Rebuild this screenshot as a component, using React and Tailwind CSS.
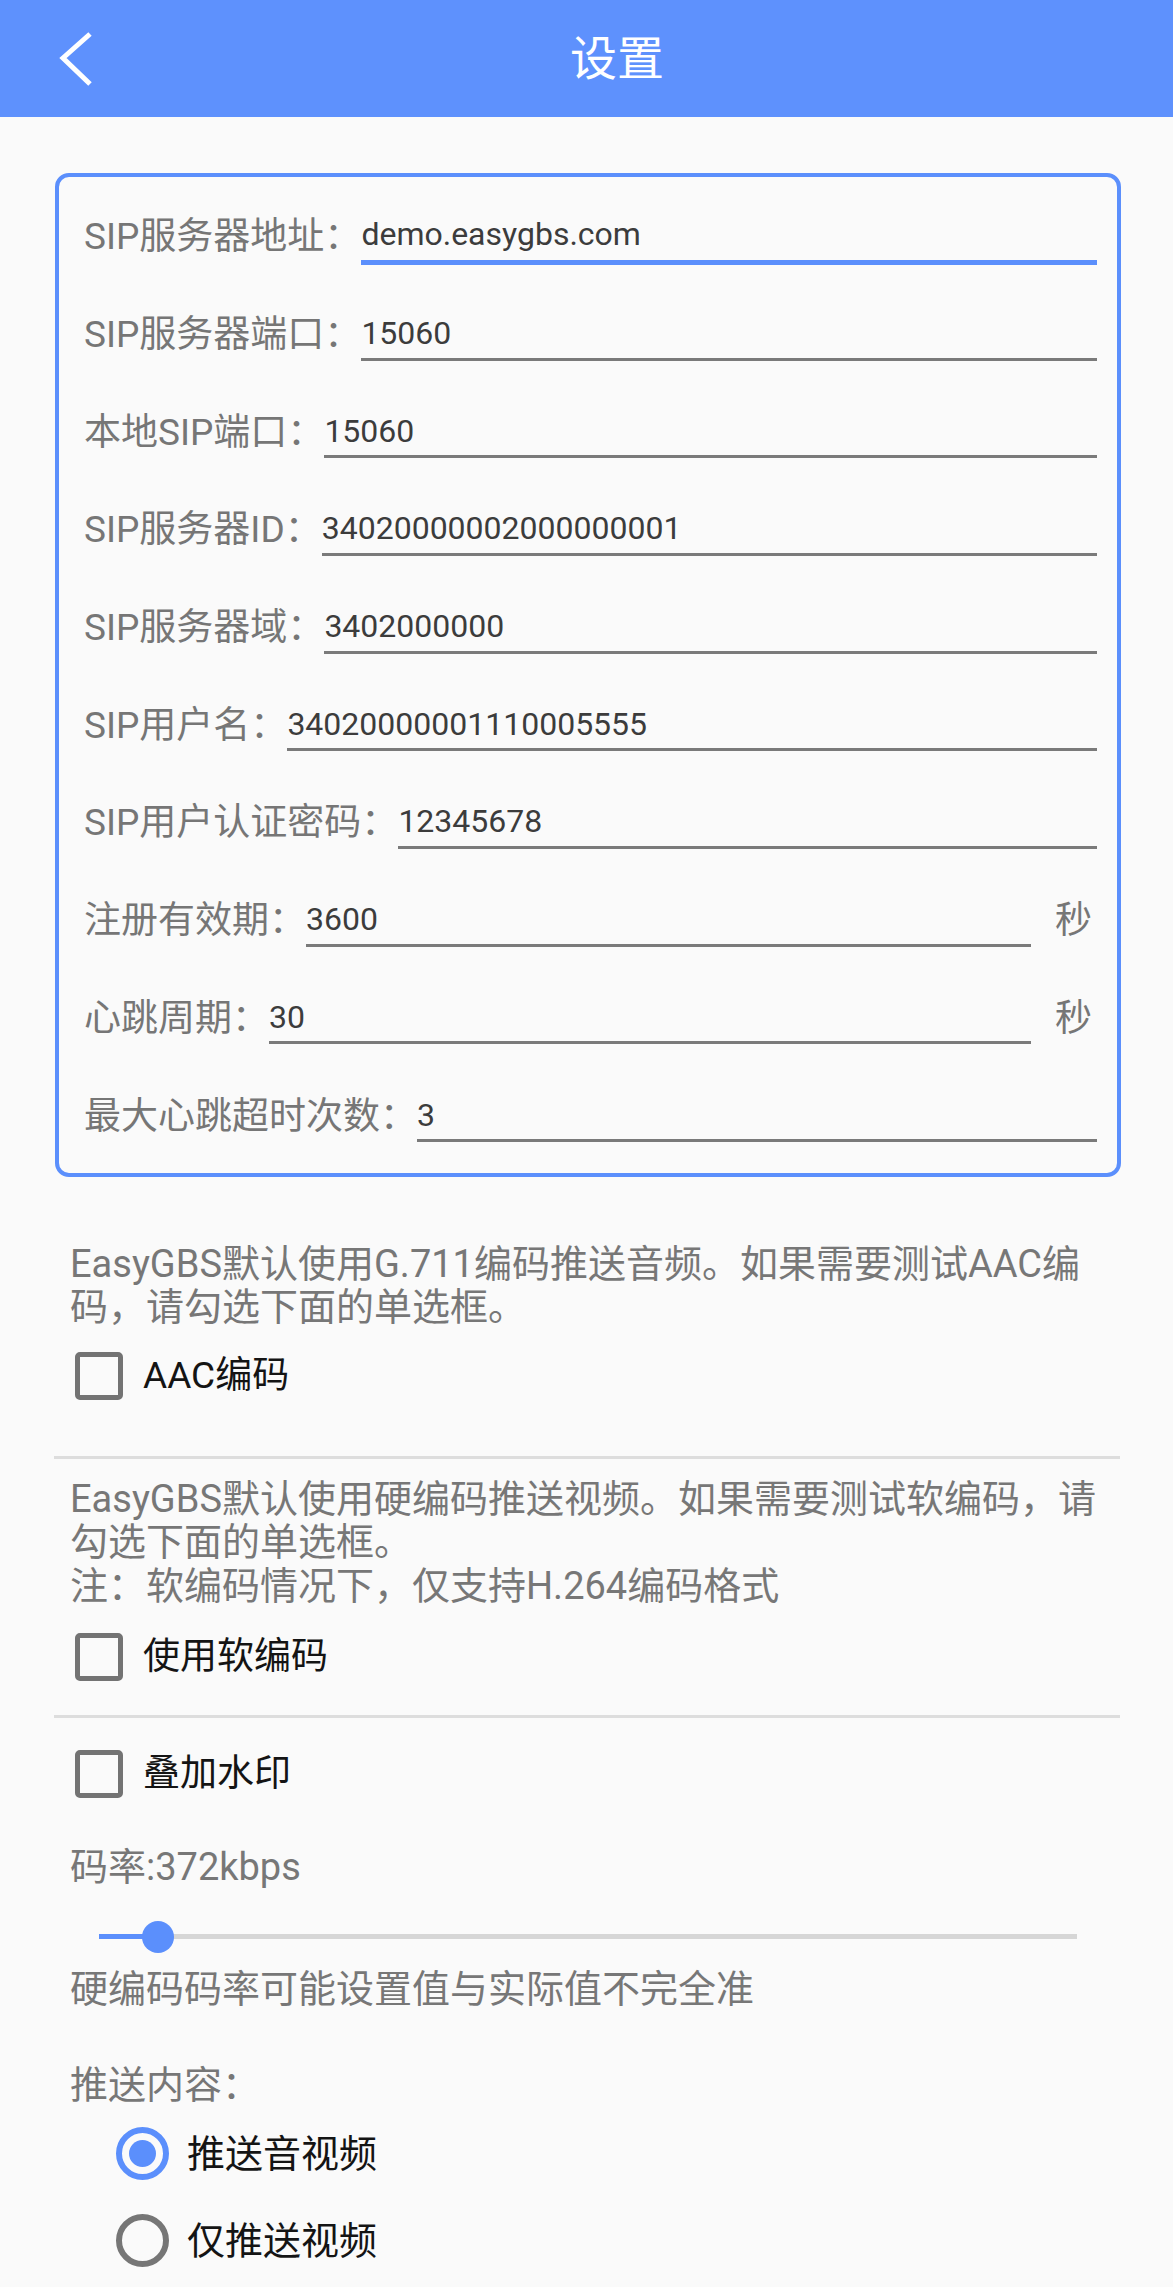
import React from "react";

const FONT = { fontFamily: '"Roboto", "Noto Sans CJK SC", sans-serif' };

const rows = [
  { label: "SIP服务器地址：", value: "demo.easygbs.com", focused: true },
  { label: "SIP服务器端口：", value: "15060" },
  { label: "本地SIP端口：", value: "15060" },
  { label: "SIP服务器ID：", value: "34020000002000000001" },
  { label: "SIP服务器域：", value: "3402000000" },
  { label: "SIP用户名：", value: "34020000001110005555" },
  { label: "SIP用户认证密码：", value: "12345678" },
  { label: "注册有效期：", value: "3600", unit: "秒" },
  { label: "心跳周期：", value: "30", unit: "秒" },
  { label: "最大心跳超时次数：", value: "3" },
];

function Row({ label, value, focused, unit }) {
  return (
    <div className="flex h-[97.7px] items-center">
      <span className="whitespace-nowrap text-[37px] leading-none text-[#767676]">{label}</span>
      <div
        className={
          focused
            ? "flex h-[56px] flex-1 items-center border-b-[5px] border-[#5b8ffc]"
            : "flex h-[52px] flex-1 items-center border-b-[3px] border-[#7a7a7a]"
        }
      >
        <span className="whitespace-nowrap text-[32px] leading-none text-[#3c3c3c]">{value}</span>
      </div>
      {unit && (
        <span className="ml-[24px] mr-[5px] text-[37px] leading-none text-[#767676]">{unit}</span>
      )}
    </div>
  );
}

function Checkbox({ label, className = "" }) {
  return (
    <div className={"flex h-[60px] items-center " + className}>
      <div className="ml-[21px] h-[48px] w-[48px] rounded-[5px] border-[5px] border-[#737373]" />
      <span className="ml-[20px] text-[37px] leading-none text-[#141414]">{label}</span>
    </div>
  );
}

function Radio({ label, checked, className = "" }) {
  return (
    <div className={"flex h-[60px] items-center " + className}>
      <div
        className={
          "ml-[62px] flex h-[53px] w-[53px] items-center justify-center rounded-full border-[6px] " +
          (checked ? "border-[#5b8ffc]" : "border-[#767676]")
        }
      >
        {checked && <div className="h-[27px] w-[27px] rounded-full bg-[#5b8ffc]" />}
      </div>
      <span className="ml-[18px] text-[38px] leading-none text-[#141414]">{label}</span>
    </div>
  );
}

export default function App() {
  return (
    <div className="min-h-[2287px] w-full bg-[#fafafa]" style={FONT}>
      {/* Header */}
      <div className="flex h-[117px] items-center bg-[#5e91fd]">
        <svg width="40" height="60" viewBox="0 0 40 60" className="ml-[57px] block shrink-0">
          <polyline
            points="33,5 6,29 33,55"
            fill="none"
            stroke="#ffffff"
            strokeWidth="5"
            strokeLinejoin="miter"
          />
        </svg>
        <div className="flex-1 pr-[36px] text-center text-[47px] leading-none text-white">设置</div>
      </div>

      {/* Card */}
      <div className="ml-[55px] mt-[56px] w-[1066px] rounded-[14px] border-[4px] border-[#5b8ffc] pb-[8px] pl-[25px] pr-[20px] pt-[11px]">
        {rows.map((r) => (
          <Row key={r.label} {...r} />
        ))}
      </div>

      {/* Lower section */}
      <div className="ml-[54px] w-[1066px]">
        <p className="mt-[66px] whitespace-nowrap pl-[16px] text-[38px] leading-[43px] text-[#777777]">
          EasyGBS默认使用G.711编码推送音频。如果需要测试AAC编
          <br />
          码，请勾选下面的单选框。
        </p>
        <Checkbox label="AAC编码" className="mt-[17px]" />
        <div className="mt-[50px] h-[3px] bg-[#dddddd]" />

        <p className="mt-[19px] whitespace-nowrap pl-[16px] text-[38px] leading-[43.5px] text-[#777777]">
          EasyGBS默认使用硬编码推送视频。如果需要测试软编码，请
          <br />
          勾选下面的单选框。
          <br />
          注：软编码情况下，仅支持H.264编码格式
        </p>
        <Checkbox label="使用软编码" className="mt-[18.5px]" />
        <div className="mt-[28px] h-[3px] bg-[#dddddd]" />

        <Checkbox label="叠加水印" className="mt-[26px]" />

        <p className="mt-[42.5px] pl-[16px] text-[38px] leading-[43px] text-[#777777]">码率:372kbps</p>

        {/* Slider */}
        <div className="relative ml-[45px] mt-[23.5px] flex h-[48px] w-[978px] items-center">
          <div className="flex h-[5px] w-full">
            <div className="h-full w-[59px] bg-[#5b8ffc]" />
            <div className="h-full flex-1 bg-[#d6d6d6]" />
          </div>
          <div className="absolute left-[43px] top-[8px] h-[32px] w-[32px] rounded-full bg-[#5b8ffc]" />
        </div>

        <p className="mt-[7.5px] pl-[16px] text-[38px] leading-[43px] text-[#777777]">
          硬编码码率可能设置值与实际值不完全准
        </p>

        <p className="mt-[53px] pl-[16px] text-[38px] leading-[43px] text-[#777777]">推送内容：</p>

        <Radio label="推送音视频" checked className="mt-[16.5px]" />
        <Radio label="仅推送视频" className="mt-[27px]" />
        <div className="h-[17px]" />
      </div>
    </div>
  );
}
